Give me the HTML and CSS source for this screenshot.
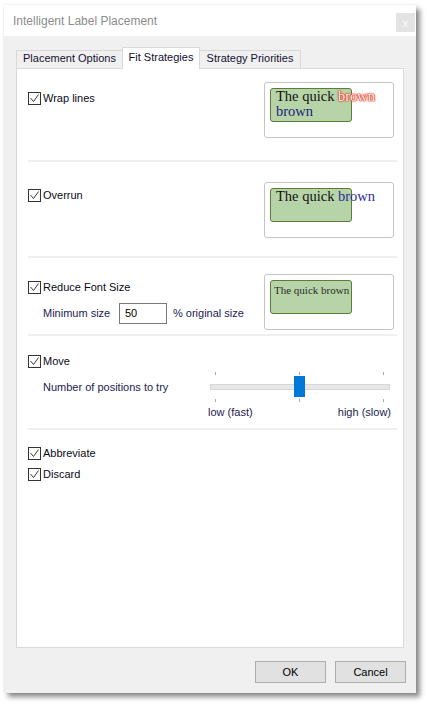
FILE: index.html
```html
<!DOCTYPE html>
<html>
<head>
<meta charset="utf-8">
<link rel="stylesheet" href="styles.css">
</head>
<body>
<div class="window">
  <div class="titlebar">
    <span class="title">Intelligent Label Placement</span>
    <span class="close">x</span>
  </div>
  <div class="client">
    <div class="tabs">
      <div class="tab tab-1">Placement Options</div>
      <div class="tab tab-2 active">Fit Strategies</div>
      <div class="tab tab-3">Strategy Priorities</div>
    </div>
    <div class="panel">
      <div class="section s1">
        <div class="left">
          <label class="check"><span class="box"><svg viewBox="0 0 11 11" width="11" height="11"><path d="M1.5 5 L4.5 8.5 L9.5 1.5" fill="none" stroke="#3a3a3a" stroke-width="1"/></svg></span><span class="ctext">Wrap lines</span></label>
        </div>
        <div class="preview">
          <div class="lbl big">The quick <span class="red">brown</span><br><span class="navy">brown</span></div>
        </div>
      </div>
      <div class="section s2">
        <div class="left">
          <label class="check"><span class="box"><svg viewBox="0 0 11 11" width="11" height="11"><path d="M1.5 5 L4.5 8.5 L9.5 1.5" fill="none" stroke="#3a3a3a" stroke-width="1"/></svg></span><span class="ctext">Overrun</span></label>
        </div>
        <div class="preview">
          <div class="lbl big">The quick <span class="blue">brown</span></div>
        </div>
      </div>
      <div class="section s3">
        <div class="left">
          <label class="check"><span class="box"><svg viewBox="0 0 11 11" width="11" height="11"><path d="M1.5 5 L4.5 8.5 L9.5 1.5" fill="none" stroke="#3a3a3a" stroke-width="1"/></svg></span><span class="ctext">Reduce Font Size</span></label>
          <div class="minrow">
            <span class="sub minlabel">Minimum size</span>
            <span class="input">50</span>
            <span class="sub">% original size</span>
          </div>
        </div>
        <div class="preview">
          <div class="lbl small">The quick brown</div>
        </div>
      </div>
      <div class="section s4">
        <label class="check"><span class="box"><svg viewBox="0 0 11 11" width="11" height="11"><path d="M1.5 5 L4.5 8.5 L9.5 1.5" fill="none" stroke="#3a3a3a" stroke-width="1"/></svg></span><span class="ctext">Move</span></label>
        <div class="sliderrow">
          <span class="sub poslabel">Number of positions to try</span>
          <div class="slider">
            <span class="tick t1 top"></span><span class="tick t2 top"></span><span class="tick t3 top"></span>
            <span class="track"></span>
            <span class="thumb"></span>
            <span class="tick t1 bot"></span><span class="tick t2 bot"></span><span class="tick t3 bot"></span>
          </div>
        </div>
        <div class="scale">
          <span class="sub">low (fast)</span>
          <span class="sub">high (slow)</span>
        </div>
      </div>
      <div class="section s5">
        <label class="check"><span class="box"><svg viewBox="0 0 11 11" width="11" height="11"><path d="M1.5 5 L4.5 8.5 L9.5 1.5" fill="none" stroke="#3a3a3a" stroke-width="1"/></svg></span><span class="ctext">Abbreviate</span></label>
        <label class="check discard"><span class="box"><svg viewBox="0 0 11 11" width="11" height="11"><path d="M1.5 5 L4.5 8.5 L9.5 1.5" fill="none" stroke="#3a3a3a" stroke-width="1"/></svg></span><span class="ctext">Discard</span></label>
      </div>
    </div>
    <div class="buttons">
      <span class="btn">OK</span>
      <span class="btn">Cancel</span>
    </div>
  </div>
</div>
</body>
</html>
```

FILE: styles.css
```css
* { box-sizing: border-box; }
html, body { margin: 0; padding: 0; background: #ffffff; }
body {
  width: 427px;
  height: 705px;
  overflow: hidden;
  font-family: "Liberation Sans", Arial, sans-serif;
  font-size: 11px;
  color: #000;
}
.window {
  margin: 5px 0 0 4px;
  width: 412px;
  height: 688px;
  background: #f0f0f0;
  box-shadow: 4px 4px 5px rgba(0,0,0,0.45), 0 0 2px rgba(0,0,0,0.12);
  display: flex;
  flex-direction: column;
}
.titlebar {
  height: 31px;
  background: #ffffff;
  display: flex;
  align-items: center;
  padding-left: 9px;
}
.title {
  font-size: 12px;
  color: #8c8c8c;
}
.close {
  margin-left: auto;
  margin-right: 1px;
  align-self: flex-start;
  margin-top: 8px;
  width: 19px;
  height: 19px;
  background: #e3e3e3;
  color: #f4f4f4;
  font-size: 11px;
  font-weight: bold;
  display: flex;
  align-items: center;
  justify-content: center;
}
.client {
  flex: 1;
  padding: 11px 12px 0 12px;
  display: flex;
  flex-direction: column;
}
.tabs {
  height: 21px;
  display: flex;
  align-items: flex-end;
}
.tab {
  height: 18px;
  border: 1px solid #d9d9d9;
  border-bottom: none;
  background: #f0f0f0;
  text-align: center;
  padding-top: 1px;
  line-height: 13px;
  color: #141030;
  white-space: nowrap;
}
.tab-1 { width: 107px; }
.tab-2 { width: 78px; margin-left: -1px; }
.tab-3 { width: 102px; margin-left: -1px; }
.tab.active {
  height: 22px;
  margin-bottom: -1px;
  background: #ffffff;
  padding-top: 3px;
  position: relative;
  z-index: 2;
}
.panel {
  height: 580px;
  background: #ffffff;
  border: 1px solid #d9d9d9;
}
.section {
  margin: 0 6px 0 11px;
  border-bottom: 2px solid #efefef;
  display: flex;
  justify-content: space-between;
  align-items: flex-start;
}
.s1 { height: 93px; padding-top: 13px; }
.s2 { height: 96px; padding-top: 20px; }
.s3 { height: 78px; padding-top: 16px; }
.s4 { height: 94px; padding-top: 19px; flex-direction: column; justify-content: flex-start; }
.s5 { border-bottom: none; padding-top: 17px; flex-direction: column; justify-content: flex-start; }
.s1 .left { padding-top: 10px; }
.s2 .left, .s3 .left { padding-top: 7px; }

.check {
  display: flex;
  align-items: center;
  height: 13px;
  line-height: 13px;
}
.box {
  width: 13px;
  height: 13px;
  border: 1px solid #333333;
  background: #ffffff;
  display: block;
}
.box svg { display: block; }
.ctext { margin-left: 2px; color: #0a0a14; }
.discard { margin-top: 8px; }
.sub { color: #1c1c50; line-height: 13px; }

.minrow {
  margin-top: 9px;
  padding-left: 15px;
  display: flex;
  align-items: center;
}
.minlabel { width: 76px; }
.input {
  width: 48px;
  height: 21px;
  border: 1px solid #7a7a7a;
  background: #fff;
  padding-left: 5px;
  line-height: 19px;
  margin-right: 6px;
  color: #000;
}

.preview {
  width: 130px;
  height: 56px;
  margin-right: 3px;
  border: 1px solid #c4c4c4;
  border-radius: 3px;
  background: #ffffff;
  padding: 5px;
}
.lbl {
  width: 82px;
  height: 34px;
  background: #b6d4a7;
  border: 1px solid #5e7b3b;
  border-radius: 3px;
  font-family: "Liberation Serif", "Times New Roman", serif;
  white-space: nowrap;
  color: #111;
}
.lbl.big {
  font-size: 14.5px;
  line-height: 15px;
  padding-left: 5px;
}
.lbl.small {
  font-size: 11px;
  line-height: 13px;
  padding: 3px 0 0 3px;
  color: #2a2a2a;
  font-weight: normal;
}
.red {
  color: #fff4f2;
  text-shadow: 0 0 1px #d8321c, 0 0 1px #d8321c, 0 0 1px #d8321c, 0 0 2px #e2412b, 0 0 3px #f08a78;
}
.navy { color: #1d1d78; }
.blue { color: #2c2c9c; }

.sliderrow {
  margin-top: 4px;
  padding-left: 15px;
  display: flex;
  align-items: center;
}
.poslabel { width: 165px; }
.slider {
  width: 183px;
  height: 30px;
  position: relative;
}
.track {
  position: absolute;
  left: 2px;
  top: 12px;
  width: 180px;
  height: 6px;
  background: #e7e7e7;
  border: 1px solid #d6d6d6;
}
.thumb {
  position: absolute;
  left: 86px;
  top: 4px;
  width: 11px;
  height: 21px;
  background: #0078d7;
}
.tick {
  position: absolute;
  width: 1px;
  height: 3px;
  background: #a8a8a8;
}
.tick.top { top: 0; }
.tick.bot { top: 27px; }
.t1 { left: 7px; }
.t2 { left: 91px; }
.t3 { left: 175px; }
.scale {
  margin-top: 4px;
  margin-left: 180px;
  width: 183px;
  display: flex;
  justify-content: space-between;
}

.buttons {
  margin-top: 13px;
  margin-right: -2px;
  display: flex;
  justify-content: flex-end;
  gap: 9px;
}
.btn {
  width: 71px;
  height: 22px;
  background: #e1e1e1;
  border: 1px solid #adadad;
  text-align: center;
  line-height: 20px;
  color: #000;
}
```
